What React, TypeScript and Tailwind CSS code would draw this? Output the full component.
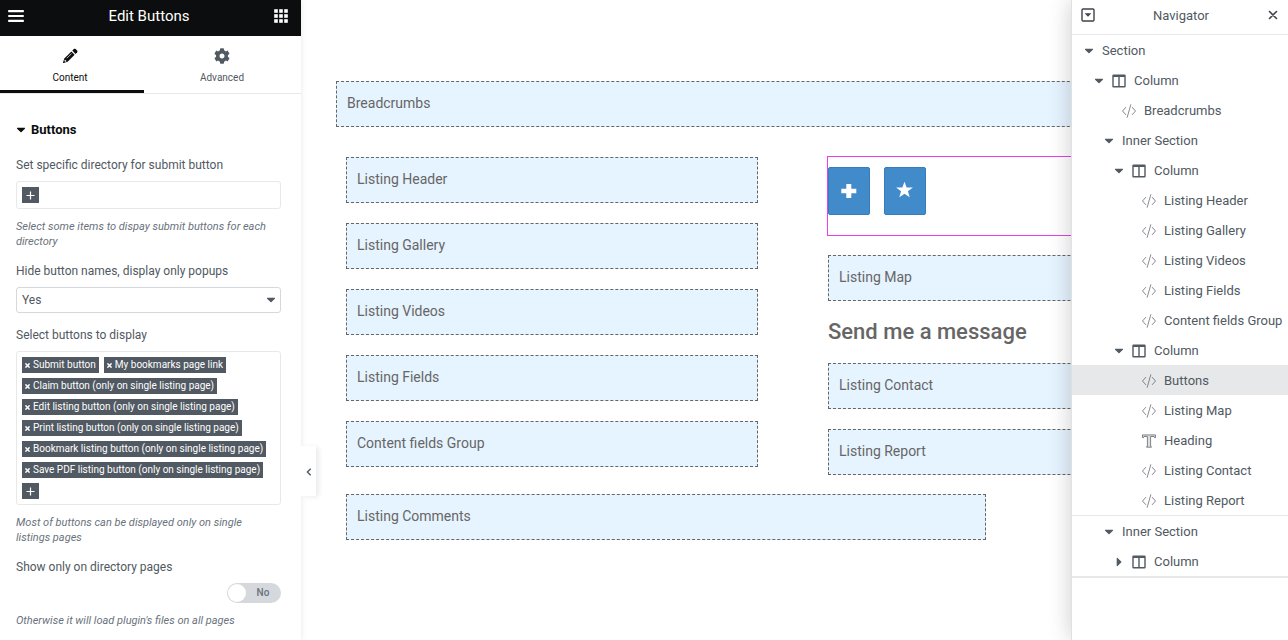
import { useState } from "react";
import type { ReactNode } from "react";

type Kind = "section" | "column" | "widget" | "heading";

interface TreeItem {
  label: string;
  depth: 0 | 1 | 2 | 3 | 4;
  kind: Kind;
  closed?: boolean;
  active?: boolean;
}

const mainTree: TreeItem[] = [
  { label: "Section", depth: 0, kind: "section" },
  { label: "Column", depth: 1, kind: "column" },
  { label: "Breadcrumbs", depth: 2, kind: "widget" },
  { label: "Inner Section", depth: 2, kind: "section" },
  { label: "Column", depth: 3, kind: "column" },
  { label: "Listing Header", depth: 4, kind: "widget" },
  { label: "Listing Gallery", depth: 4, kind: "widget" },
  { label: "Listing Videos", depth: 4, kind: "widget" },
  { label: "Listing Fields", depth: 4, kind: "widget" },
  { label: "Content fields Group", depth: 4, kind: "widget" },
  { label: "Column", depth: 3, kind: "column" },
  { label: "Buttons", depth: 4, kind: "widget", active: true },
  { label: "Listing Map", depth: 4, kind: "widget" },
  { label: "Heading", depth: 4, kind: "heading" },
  { label: "Listing Contact", depth: 4, kind: "widget" },
  { label: "Listing Report", depth: 4, kind: "widget" },
];

const secondTree: TreeItem[] = [
  { label: "Inner Section", depth: 2, kind: "section" },
  { label: "Column", depth: 3, kind: "column", closed: true },
];

const indent = {
  0: "pl-[12px]",
  1: "pl-[22px]",
  2: "pl-[32px]",
  3: "pl-[42px]",
  4: "pl-[52px]",
};

const selectedButtons = [
  "Submit button",
  "My bookmarks page link",
  "Claim button (only on single listing page)",
  "Edit listing button (only on single listing page)",
  "Print listing button (only on single listing page)",
  "Bookmark listing button (only on single listing page)",
  "Save PDF listing button (only on single listing page)",
];

function CaretDown({ className = "" }: { className?: string }) {
  return (
    <svg viewBox="0 0 10 6" className={`h-[6px] w-[10px] shrink-0 ${className}`} fill="currentColor" aria-hidden="true">
      <path d="M1.500.8h7c.5 0 .7.5.4.9L5.500 4.900a.7.7 0 0 1-1 0L1.100 1.700C.8 1.300 1 .8 1.500.8z" />
    </svg>
  );
}

function CaretRight() {
  return (
    <svg viewBox="0 0 10 10" className="size-[10px] shrink-0" fill="currentColor" aria-hidden="true">
      <path d="M2.700 1.300v7.400c0 .5.5.7.9.4l3.600-3.600a.7.7 0 0 0 0-1L3.600.9c-.4-.3-.9-.1-.9.4z" />
    </svg>
  );
}

function ColumnIcon() {
  return (
    <svg viewBox="0 0 14 14" className="size-[14px] shrink-0" fill="currentColor" aria-hidden="true">
      <path
        fillRule="evenodd"
        d="M1.500.5h11A1.200 1.200 0 0 1 13.700 1.700v10.600a1.200 1.200 0 0 1-1.200 1.200h-11A1.200 1.200 0 0 1 .3 12.300V1.700A1.200 1.200 0 0 1 1.500.5zM1.700 3.100v9h4.600v-9zM7.700 3.100v9h4.600v-9z"
      />
    </svg>
  );
}

function CodeIcon() {
  return (
    <svg viewBox="0 0 14 14" className="size-[14px] shrink-0" fill="none" stroke="currentColor" strokeWidth=".7" strokeLinecap="round" strokeLinejoin="round" aria-hidden="true">
      <path d="M3.700 3.400.5 7l3.200 3.600M10.300 3.400 13.500 7l-3.200 3.600M8.800.7 5.200 13.300" />
    </svg>
  );
}

function HeadingIcon() {
  return (
    <svg viewBox="0 0 14 14" className="size-[14px] shrink-0" fill="none" stroke="currentColor" strokeWidth=".7" strokeLinejoin="round" aria-hidden="true">
      <path fill="currentColor" fillOpacity=".2" d="M.5.9h13v2.800h-1l-.5-1.200H8.600v9.800l.8.4v.5H4.600v-.5l.8-.4V2.500H2l-.5 1.200h-1z" />
    </svg>
  );
}

function TreeRow({ item }: { item: TreeItem }) {
  const branch = item.kind === "section" || item.kind === "column";
  return (
    <li>
      <button
        type="button"
        className={`flex h-[30px] w-full items-center gap-2 pt-0.5 text-left text-[13px] whitespace-nowrap ${indent[item.depth]} ${
          item.active ? "bg-[#e6e8ea]" : ""
        }`}
      >
        <span className="flex w-[10px] shrink-0 justify-center">
          {branch && (item.closed ? <CaretRight /> : <CaretDown />)}
        </span>
        {item.kind === "column" && <ColumnIcon />}
        {item.kind === "widget" && <CodeIcon />}
        {item.kind === "heading" && <HeadingIcon />}
        <span>{item.label}</span>
      </button>
    </li>
  );
}

function Navigator() {
  return (
    <aside className="absolute inset-y-0 right-0 z-10 flex w-[217px] flex-col overflow-hidden border-l border-[#e0e1e3] bg-white text-[#515962] shadow-[0_0_22px_rgba(0,0,0,0.2)]">
      <header className="flex h-[35px] shrink-0 items-center justify-between border-b border-[#e6e8ea] px-[9px] pb-1">
        <button type="button" aria-label="Expand all elements">
          <svg viewBox="0 0 14 14" className="size-[14px]" aria-hidden="true">
            <rect x="1" y="1" width="12" height="12" rx="1" fill="none" stroke="#3f444b" strokeWidth="1.400" />
            <path d="M3.600 5.200h6.800L7 8.800z" fill="#3f444b" />
          </svg>
        </button>
        <h2 className="pt-0.5 text-[13px]">Navigator</h2>
        <button type="button" aria-label="Close navigator">
          <svg viewBox="0 0 12 12" className="size-[12px]" stroke="#3f444b" strokeWidth="1.600" strokeLinecap="round" aria-hidden="true">
            <path d="M2.500 2.500l7 7M9.500 2.500l-7 7" />
          </svg>
        </button>
      </header>
      <ul className="border-b border-[#e6e8ea]">
        {mainTree.map((item, i) => (
          <TreeRow key={i} item={item} />
        ))}
      </ul>
      <ul className="border-b-2 border-[#e6e8ea]">
        {secondTree.map((item, i) => (
          <TreeRow key={i} item={item} />
        ))}
      </ul>
    </aside>
  );
}

function Placeholder({ children, className = "" }: { children: ReactNode; className?: string }) {
  return (
    <div className={`flex h-[46px] items-center border border-dashed border-[#666] bg-[#e6f4ff] px-[10px] pb-[2px] text-[14px] text-[#666] ${className}`}>
      {children}
    </div>
  );
}

function AddChip({ label }: { label: string }) {
  return (
    <button type="button" aria-label={label} className="flex h-4 w-[17px] items-center justify-center bg-[#515962]">
      <svg viewBox="0 0 9 9" className="size-[9px]" stroke="#fff" strokeWidth="1.200" aria-hidden="true">
        <path d="M4.500.5v8M.5 4.500h8" />
      </svg>
    </button>
  );
}

function Chip({ children }: { children: string }) {
  return (
    <li className="flex h-4 items-center gap-[3px] bg-[#515962] px-[3px] text-[10px] whitespace-nowrap text-white">
      <button type="button" aria-label={`Remove ${children}`}>
        <svg viewBox="0 0 5 5" className="size-[5px]" stroke="#fff" strokeWidth="1.500" aria-hidden="true">
          <path d="M.4.4l4.200 4.200M4.600.4.4 4.600" />
        </svg>
      </button>
      <span>{children}</span>
    </li>
  );
}

function Note({ children }: { children: ReactNode }) {
  return <p className="mt-[10px] pr-2 text-[11px] leading-[15px] text-[#69727d] italic">{children}</p>;
}

function Sidebar() {
  const [enabled, setEnabled] = useState(false);
  return (
    <aside className="relative z-10 w-[301px] shrink-0 bg-white text-[#515962] shadow-[0_0_6px_rgba(0,0,0,0.1)]">
      <header className="flex h-9 items-center justify-between bg-[#0c0d0e] pr-[13px] pl-2 pb-1 text-white">
        <button type="button" aria-label="Menu">
          <svg viewBox="0 0 16 12" className="h-[12px] w-[16px]" fill="#fff" aria-hidden="true">
            <rect width="16" height="2.200" rx="1" />
            <rect y="4.900" width="16" height="2.200" rx="1" />
            <rect y="9.800" width="16" height="2.200" rx="1" />
          </svg>
        </button>
        <h1 className="text-[15px]">Edit Buttons</h1>
        <button type="button" aria-label="Widgets panel">
          <svg viewBox="0 0 14 14" className="size-[14px]" fill="#fff" aria-hidden="true">
            {[0, 5, 10].map((y) => [0, 5, 10].map((x) => <rect key={`${x}-${y}`} x={x + 0.2} y={y + 0.2} width="3.600" height="3.600" />))}
          </svg>
        </button>
      </header>

      <div role="tablist" className="flex h-[58px] border-b border-[#e6e8ea] text-[10px]">
        <button type="button" role="tab" aria-selected="true" className="flex w-[144px] flex-col items-center gap-[6px] border-b-[3px] border-[#0c0d0e] pt-3 pr-1 text-[#0c0d0e]">
          <svg viewBox="0 0 16 16" className="size-[16px]" aria-hidden="true">
            <path fill="#0c0d0e" d="M10.300 2.600 11.800 1.100c.6-.6 1.200-.6 1.800 0l1.500 1.500c.5.5.5 1.200 0 1.800L13.500 5.900z" />
            <path fill="#0c0d0e" d="M9.400 3.500 12.600 6.700 5.600 13.700 1.600 15c-.5.100-.7-.1-.6-.6L2.300 10.500z" />
            <path stroke="#fff" strokeWidth=".7" d="M9.600 5.500 4.800 10.300" fill="none" />
            <path fill="#fff" d="M2.900 11.400l1.800 1.800-1.600.5-.7-.7z" />
          </svg>
          <span>Content</span>
        </button>
        <button type="button" role="tab" aria-selected="false" className="flex flex-1 flex-col items-center gap-[6px] pt-3 pr-px">
          <svg viewBox="0 0 512 512" className="size-[16px]" fill="currentColor" aria-hidden="true">
            <path d="M487.400 315.700l-42.600-24.600c4.300-23.200 4.300-47 0-70.200l42.600-24.600c4.900-2.800 7.100-8.600 5.500-14-11.100-35.600-30-67.800-54.700-94.600-3.800-4.100-10-5.100-14.800-2.300L380.800 110c-17.900-15.400-38.500-27.300-60.800-35.100V25.800c0-5.600-3.900-10.500-9.400-11.700-36.700-8.200-74.300-7.800-109.200 0-5.500 1.200-9.400 6.100-9.400 11.700V75c-22.200 7.900-42.800 19.800-60.800 35.100L88.700 85.500c-4.900-2.800-11-1.900-14.800 2.300-24.700 26.700-43.600 58.900-54.700 94.600-1.700 5.400.6 11.200 5.500 14L67.300 221c-4.300 23.200-4.300 47 0 70.200l-42.600 24.600c-4.900 2.800-7.100 8.600-5.500 14 11.100 35.600 30 67.800 54.700 94.600 3.800 4.100 10 5.100 14.800 2.300l42.600-24.600c17.900 15.400 38.500 27.300 60.800 35.100v49.200c0 5.600 3.900 10.500 9.400 11.700 36.700 8.200 74.300 7.800 109.200 0 5.500-1.200 9.400-6.100 9.400-11.700v-49.200c22.200-7.900 42.800-19.800 60.800-35.100l42.600 24.600c4.900 2.800 11 1.900 14.800-2.300 24.700-26.700 43.600-58.900 54.700-94.600 1.500-5.500-.7-11.300-5.600-14.100zM256 336c-44.100 0-80-35.900-80-80s35.900-80 80-80 80 35.900 80 80-35.900 80-80 80z" />
          </svg>
          <span>Advanced</span>
        </button>
      </div>

      <div className="flex flex-col pt-7 pr-5 pl-4 text-[12px] leading-4">
        <h2 className="mb-[19px] text-[13px] font-bold text-[#0c0d0e]">
          <button type="button" className="flex items-center gap-[5px]">
            <CaretDown />
            Buttons
          </button>
        </h2>

        <div className="flex flex-col gap-[14px]">
          <div>
            <span>Set specific directory for submit button</span>
            <div className="mt-2 flex rounded-[3px] border border-[#e6e8ea] p-[5px]">
              <AddChip label="Add directory" />
            </div>
            <Note>Select some items to dispay submit buttons for each directory</Note>
          </div>

          <div>
            <label htmlFor="hide-names">Hide button names, display only popups</label>
            <div className="relative mt-2">
              <select id="hide-names" defaultValue="Yes" className="block h-[26px] w-full appearance-none rounded-[3px] border border-[#d5d8dc] bg-white px-[5px] text-[12px]">
                <option>Yes</option>
                <option>No</option>
              </select>
              <CaretDown className="pointer-events-none absolute top-[10px] right-[5px]" />
            </div>
          </div>

          <div>
            <span>Select buttons to display</span>
            <ul className="mt-2 flex flex-wrap gap-[5px] rounded-[3px] border border-[#e6e8ea] p-[5px]">
              {selectedButtons.map((name) => (
                <Chip key={name}>{name}</Chip>
              ))}
              <li className="w-full">
                <AddChip label="Add button" />
              </li>
            </ul>
            <Note>Most of buttons can be displayed only on single listings pages</Note>
          </div>

          <div>
            <label htmlFor="directory-only">Show only on directory pages</label>
            <label className="relative mt-2 ml-auto flex h-5 w-[54px] items-center rounded-full bg-[#d5d8dc] p-px text-[10px] font-medium text-[#69727d]">
              <input
                id="directory-only"
                type="checkbox"
                checked={enabled}
                onChange={(e) => setEnabled(e.target.checked)}
                className="peer absolute inset-0 appearance-none"
              />
              <span className="size-[18px] rounded-full bg-white peer-checked:order-2" />
              <span className="flex-1 text-center">{enabled ? "Yes" : "No"}</span>
            </label>
            <Note>Otherwise it will load plugin's files on all pages</Note>
          </div>
        </div>
      </div>

      <button
        type="button"
        aria-label="Hide panel"
        className="absolute top-[446px] left-full flex h-[50px] w-[15px] items-center justify-center bg-white pt-0.5 shadow-[3px_1px_5px_rgba(0,0,0,0.08)]"
      >
        <svg viewBox="0 0 6 8" className="h-[8px] w-[6px]" fill="none" stroke="#515962" strokeWidth="1.400" aria-hidden="true">
          <path d="M4.700.7 1.400 4l3.300 3.300" />
        </svg>
      </button>
    </aside>
  );
}

function Canvas() {
  return (
    <main className="min-w-0 flex-1 overflow-hidden bg-white pt-[81px] pr-[38px] pl-[35px]">
      <Placeholder>Breadcrumbs</Placeholder>
      <div className="mt-[30px] grid grid-cols-2 gap-[70px] px-[10px]">
        <div className="flex flex-col gap-5">
          <Placeholder>Listing Header</Placeholder>
          <Placeholder>Listing Gallery</Placeholder>
          <Placeholder>Listing Videos</Placeholder>
          <Placeholder>Listing Fields</Placeholder>
          <Placeholder>Content fields Group</Placeholder>
        </div>
        <div className="flex flex-col">
          <div className="mb-5 flex h-[78px] items-start gap-[14px] pt-[10px] outline outline-[#e83eee]">
            <button type="button" aria-label="Submit listing" className="flex h-12 w-[42px] items-center justify-center rounded-[2px] border border-[#357ebd] bg-[#428bca]">
              <svg viewBox="0 0 16 16" className="size-[16px]" fill="#fff" aria-hidden="true">
                <path d="M5.300 1h5v4.700h5v4.600h-5V15h-5v-4.700h-5V5.700h5z" />
              </svg>
            </button>
            <button type="button" aria-label="Bookmarks" className="flex h-12 w-[42px] items-center justify-center rounded-[2px] border border-[#357ebd] bg-[#428bca]">
              <svg viewBox="0 0 18 18" className="size-[18px]" fill="#fff" aria-hidden="true">
                <path d="M8.500-.4 10.600 5.500h6.300l-5 3.800 1.800 6-5.200-3.600-5.200 3.600 1.800-6-5-3.800h6.300z" />
              </svg>
            </button>
          </div>
          <Placeholder>Listing Map</Placeholder>
          <h2 className="py-4 text-[22px] leading-[30px] font-medium text-[#666]">Send me a message</h2>
          <div className="flex flex-col gap-5">
            <Placeholder>Listing Contact</Placeholder>
            <Placeholder>Listing Report</Placeholder>
          </div>
        </div>
      </div>
      <Placeholder className="mt-[19px] ml-[10px] max-w-[640px]">Listing Comments</Placeholder>
    </main>
  );
}

export default function App() {
  return (
    <div className="relative flex h-screen min-h-[640px] overflow-hidden bg-white font-['Roboto',sans-serif]">
      <Sidebar />
      <Canvas />
      <Navigator />
    </div>
  );
}
